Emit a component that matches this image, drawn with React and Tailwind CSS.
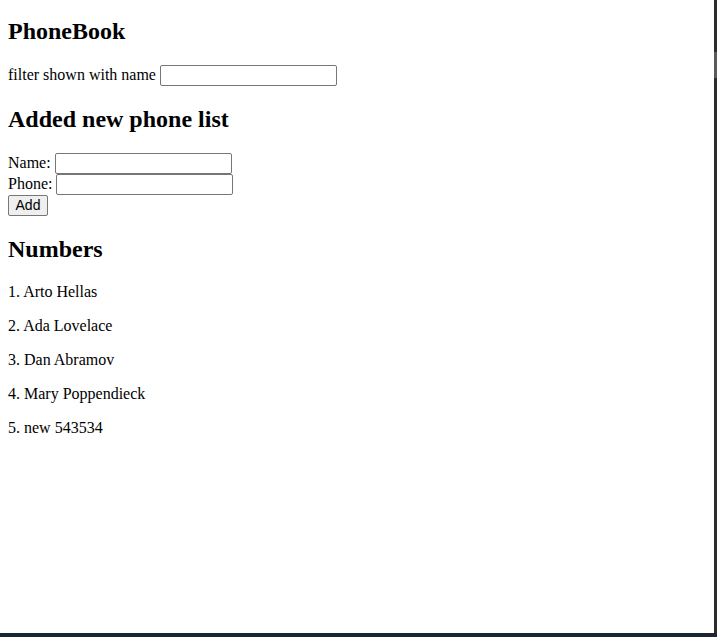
const people = ['Arto Hellas', 'Ada Lovelace', 'Dan Abramov', 'Mary Poppendieck', 'new 543534']

function Field({ label }) {
  return (
    <div className="h-[21px] flex items-center gap-[4px]">
      <span>{label}</span>
      <input
        type="text"
        className="w-[177px] h-[21px] border border-[#767676] rounded-[2px] px-[2px] py-px bg-white text-[13.33px]"
      />
    </div>
  )
}

export default function App() {
  return (
    <div className="w-[717px] h-[637px] flex flex-col overflow-hidden">
      <div className="flex-1 flex min-h-0">
        <div className="flex-1 bg-white overflow-hidden px-2 text-black text-[16px] leading-[18px] font-['Liberation_Serif','Times_New_Roman',serif]">
          <h2 className="text-[24px] font-bold mt-[18px] mb-[19.92px] leading-[27px]">PhoneBook</h2>
          <Field label="filter shown with name" />

          <h2 className="text-[24px] font-bold mt-[19.92px] mb-[19.92px] leading-[27px]">Added new phone list</h2>
          <form onSubmit={(e) => e.preventDefault()}>
            <Field label="Name:" />
            <Field label="Phone:" />
            <div className="h-[21px] flex">
              <button
                type="submit"
                className="w-[40px] h-[21px] border border-[#767676] rounded-[2px] bg-[#efefef] text-[14px] leading-[17px] text-black font-['Liberation_Sans',Arial,sans-serif]"
              >
                Add
              </button>
            </div>
          </form>

          <h2 className="text-[24px] font-bold mt-[19.92px] mb-[19.92px] leading-[27px]">Numbers</h2>
          {people.map((p, i) => (
            <p key={p} className="my-4">
              {i + 1}. {p}
            </p>
          ))}
        </div>
        {/* window scrollbar edge */}
        <div className="w-[3px] bg-[#2c2c31] flex flex-col">
          <div className="h-[52px]" />
          <div className="h-[26px] bg-[#5a5a5e]" />
        </div>
      </div>
      <div className="h-[4px] bg-[#1b2631]" />
    </div>
  )
}
